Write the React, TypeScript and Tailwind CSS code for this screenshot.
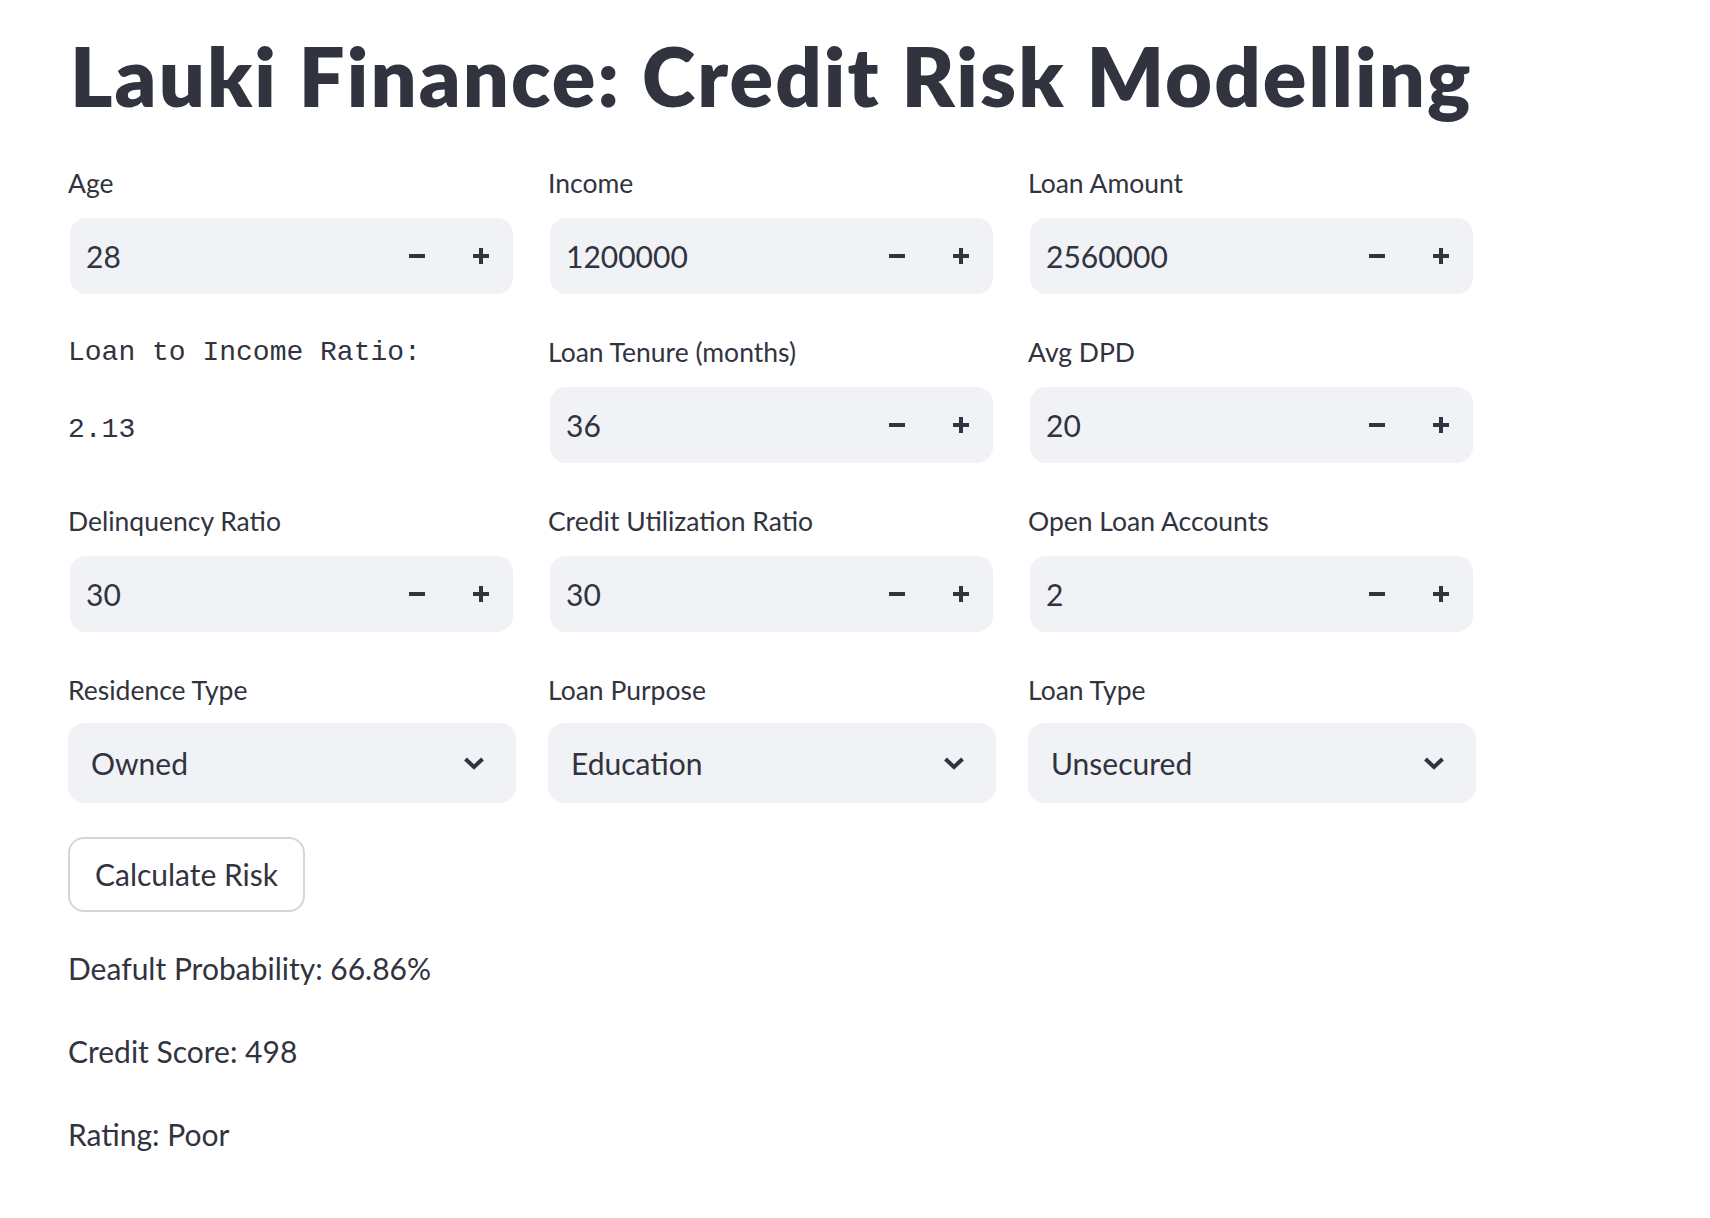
import React from "react";

function Minus() {
  return (
    <svg width="16" height="16" viewBox="0 0 16 16" className="block">
      <rect x="0" y="6" width="16" height="4" fill="#31333f" />
    </svg>
  );
}

function Plus() {
  return (
    <svg width="16" height="16" viewBox="0 0 16 16" className="block">
      <rect x="0" y="6" width="16" height="4" fill="#31333f" />
      <rect x="6" y="0" width="4" height="16" fill="#31333f" />
    </svg>
  );
}

function Chevron() {
  return (
    <svg width="22" height="14" viewBox="0 0 22 14" className="block">
      <polyline points="2.5,3 11,11 19.5,3" fill="none" stroke="#31333f" strokeWidth="4" strokeLinejoin="miter" />
    </svg>
  );
}

function Label({ children }: { children: React.ReactNode }) {
  return (
    <div className="h-[49px] mb-[8px] text-[26.5px] leading-[48px] text-[#31333f]">{children}</div>
  );
}

function NumberInput({ label, value }: { label: string; value: string }) {
  return (
    <div className="flex flex-col">
      <Label>{label}</Label>
      <div className="h-[80px] p-[2px] pr-[3px]">
        <div className="h-full rounded-[16px] bg-[#f0f2f6] flex items-center">
          <div className="flex-1 pl-[16px] text-[30px] text-[#31333f]">{value}</div>
          <div className="w-[64px] h-full flex items-center justify-center">
            <Minus />
          </div>
          <div className="w-[64px] h-full flex items-center justify-center">
            <Plus />
          </div>
        </div>
      </div>
    </div>
  );
}

function Select({ label, value }: { label: string; value: string }) {
  return (
    <div className="flex flex-col">
      <Label>{label}</Label>
      <div className="h-[80px] rounded-[16px] bg-[#f0f2f6] flex items-center pl-[23px] pr-[31px]">
        <div className="flex-1 text-[30px] text-[#31333f]">{value}</div>
        <Chevron />
      </div>
    </div>
  );
}

export default function App() {
  return (
    <div className="min-h-screen bg-white font-[Lato,'Noto_Sans',sans-serif] text-[#31333f]">
      <div className="w-[1408px] ml-[68px] pt-[28px]">
        <h1 className="text-[81px] font-extrabold leading-[96px] tracking-[2.1px] text-[#31333f] pl-[2px]">
          Lauki Finance: Credit Risk Modelling
        </h1>
        <div className="mt-[35px] grid grid-cols-3 gap-x-[32px] gap-y-[32px]">
          <NumberInput label="Age" value="28" />
          <NumberInput label="Income" value="1200000" />
          <NumberInput label="Loan Amount" value="2560000" />

          <div className="flex flex-col font-['Liberation_Mono',monospace] text-[28px] text-[#31333f] pt-[3px]">
            <div className="leading-[44px]">Loan to Income Ratio:</div>
            <div className="mt-[33px] leading-[44px]">2.13</div>
          </div>
          <NumberInput label="Loan Tenure (months)" value="36" />
          <NumberInput label="Avg DPD" value="20" />

          <NumberInput label="Delinquency Ratio" value="30" />
          <NumberInput label="Credit Utilization Ratio" value="30" />
          <NumberInput label="Open Loan Accounts" value="2" />

          <Select label="Residence Type" value="Owned" />
          <Select label="Loan Purpose" value="Education" />
          <Select label="Loan Type" value="Unsecured" />
        </div>

        <button className="mt-[34px] h-[75px] w-[237px] rounded-[16px] border-2 border-[#d6d6d9] bg-white text-[30px] text-[#31333f] flex items-center justify-center">
          Calculate Risk
        </button>

        <div className="mt-[31px] flex flex-col gap-[32px] text-[30px] leading-[51px]">
          <p>Deafult Probability: 66.86%</p>
          <p>Credit Score: 498</p>
          <p>Rating: Poor</p>
        </div>
      </div>
    </div>
  );
}
